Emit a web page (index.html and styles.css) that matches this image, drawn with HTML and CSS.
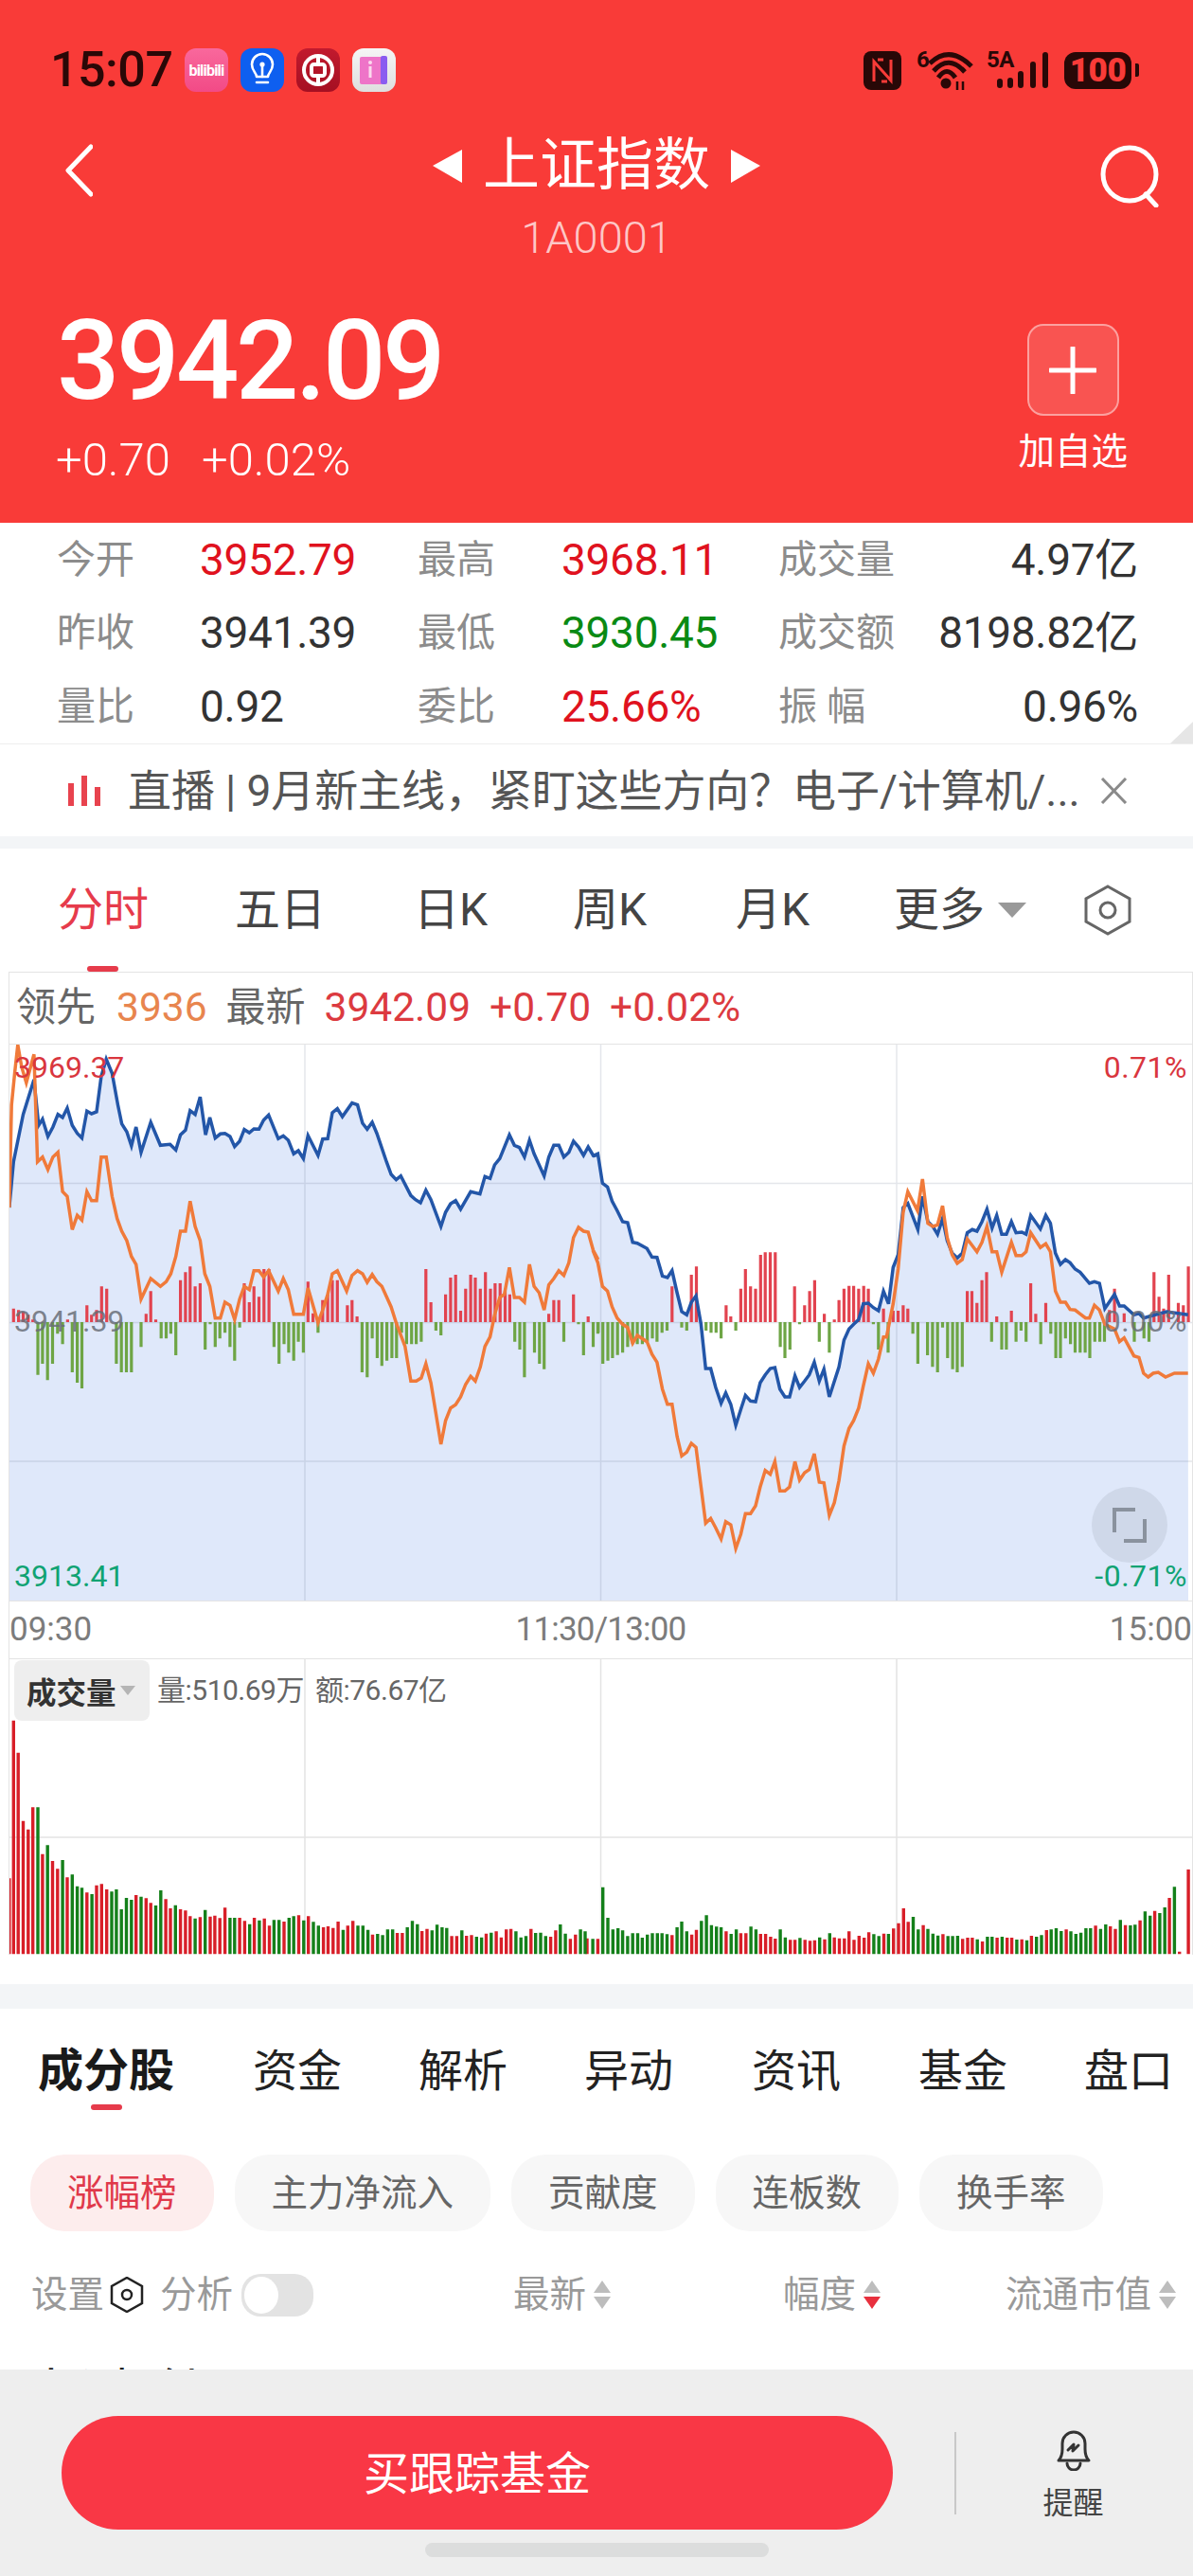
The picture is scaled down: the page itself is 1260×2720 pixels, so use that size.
FILE: index.html
```html
<!DOCTYPE html>
<html lang="zh">
<head>
<meta charset="utf-8">
<title>上证指数</title>
<link rel="stylesheet" href="styles.css">
</head>
<body>
<div class="page">
  <header class="hero">
    <div class="status">
      <span class="clock">15:07</span>
      <div class="apps">
        <span class="app app-bili"><span class="bili-text">bilibili</span></span>
        <svg class="app app-bulb" viewBox="0 0 46 46"><path class="bulb-line" d="M17 30c0-4-5-6-5-13a11 11 0 0 1 22 0c0 7-5 9-5 13z"/><path class="bulb-line" d="M23 30V19M17 36h12"/><circle class="bulb-dot" cx="23" cy="17" r="2.6"/></svg>
        <svg class="app app-boc" viewBox="0 0 46 46"><circle class="boc-line" cx="23" cy="23" r="15"/><rect class="boc-line" x="16" y="17" width="14" height="12" rx="2.5"/><path class="boc-line" d="M23 8v9M23 29v9"/></svg>
        <svg class="app app-book" viewBox="0 0 46 46"><rect class="book-a" x="8" y="9" width="24" height="29" rx="2"/><rect class="book-b" x="30" y="8" width="7" height="30" rx="2"/><rect class="book-i" x="17.500" y="19" width="3" height="12"/><circle class="book-j" cx="19" cy="15" r="2"/></svg>
      </div>
      <div class="sys">
        <svg class="nfc" viewBox="0 0 40 41"><rect class="ink" width="40" height="41" rx="8"/><path class="nfc-n" d="M11 32V11l9 10 9 10V9M15 9h6M19 32h6"/></svg>
        <div class="wifi">
          <span class="mini">6</span>
          <svg class="wifi-svg" viewBox="0 0 48 42"><circle class="ink" cx="18" cy="35" r="5.500"/><path class="ink-line" d="M1 14Q22-6 45 17M5 22Q21 4 38 23M10 29Q19 16 28 29"/><path class="ink-thin" d="M30 42V33M36 33v9"/></svg>
        </div>
        <div class="signal">
          <span class="mini">5A</span>
          <svg class="sig-svg" viewBox="0 0 60 40"><path class="ink-bar" d="M8 36v-4M19 36v-5M30 36V24M43 36V14M56 36V4"/></svg>
        </div>
        <div class="battery"><span class="batt-body">100</span><span class="batt-tip"></span></div>
      </div>
    </div>

    <div class="nav">
      <svg class="back" viewBox="0 0 30 56"><path class="white-line" d="M28 3 4 28l24 25"/></svg>
      <div class="title-box">
        <div class="title-row">
          <svg class="tri" viewBox="0 0 31 35"><path class="white-fill" d="M31 0v35L0 17z"/></svg>
          <span class="title">上证指数</span>
          <svg class="tri" viewBox="0 0 31 35"><path class="white-fill" d="M0 0v35l31-18z"/></svg>
        </div>
        <div class="code">1A0001</div>
      </div>
      <svg class="search" viewBox="0 0 66 66"><circle class="white-line" cx="32" cy="31" r="28"/><path class="white-line" d="m49 52 11 12"/></svg>
    </div>

    <div class="quote">
      <div class="quote-left">
        <div class="price">3942.09</div>
        <div class="change"><span>+0.70</span><span>+0.02%</span></div>
      </div>
      <div class="add">
        <div class="add-btn"><svg class="plus" viewBox="0 0 50 50"><path class="white-line" d="M25 1v48M1 25h48"/></svg></div>
        <div class="add-label">加自选</div>
      </div>
    </div>
  </header>

  <section class="stats">
    <span class="lab">今开</span><span class="num red">3952.79</span>
    <span class="lab">最高</span><span class="num red">3968.11</span>
    <span class="lab">成交量</span><span class="num end">4.97亿</span>
    <span class="lab">昨收</span><span class="num">3941.39</span>
    <span class="lab">最低</span><span class="num green">3930.45</span>
    <span class="lab">成交额</span><span class="num end">8198.82亿</span>
    <span class="lab">量比</span><span class="num">0.92</span>
    <span class="lab">委比</span><span class="num red">25.66%</span>
    <span class="lab">振 幅</span><span class="num end">0.96%</span>
    <span class="corner"></span>
  </section>

  <section class="notice">
    <svg class="live" viewBox="0 0 35 32"><path class="live-bar" d="M3 32V8M17 32V0M31 32V12"/></svg>
    <span class="notice-text">直播 | 9月新主线，紧盯这些方向？电子/计算机/...</span>
    <svg class="close" viewBox="0 0 29 28"><path class="close-line" d="m2 1 25 26M27 1 2 27"/></svg>
  </section>

  <div class="band band-a"></div>

  <nav class="ktabs">
    <span class="ktab ktab-on">分时</span>
    <span class="ktab">五日</span>
    <span class="ktab">日K</span>
    <span class="ktab">周K</span>
    <span class="ktab">月K</span>
    <span class="ktab more">更多<svg class="more-tri" viewBox="0 0 30 16"><path class="more-fill" d="M0 0h30L15 16z"/></svg></span>
    <svg class="hex hex-big" viewBox="0 0 50 54"><path class="hex-line" d="M25 2 48 15v24L25 52 2 39V15z"/><circle class="hex-line" cx="25" cy="27" r="8"/></svg>
  </nav>

  <section class="chart">
    <div class="chart-head">
      <span class="hd-gray">领先</span><span class="hd-orange">3936</span>
      <span class="hd-gray">最新</span><span class="hd-red">3942.09</span><span class="hd-red">+0.70</span><span class="hd-red">+0.02%</span>
    </div>
    <div class="plot">
      <svg class="plot-svg" viewBox="10 1103 1249 587">
        <path id="area" class="area"/>
        <path class="grid" d="M322 1103V1690M634.500 1103V1690M947 1103V1690M10 1249.500H1259M10 1543H1259M10 1396.500H1259"/>
        <path id="macd-red" class="macd-red"/>
        <path id="macd-green" class="macd-green"/>
        <path id="line-blue" class="line-blue"/>
        <path id="line-orange" class="line-orange"/>
      </svg>
      <span class="tag tag-l tag-top red-soft">3969.37</span>
      <span class="tag tag-l tag-mid gray-soft">3941.39</span>
      <span class="tag tag-l tag-bot teal">3913.41</span>
      <span class="tag tag-r tag-top red-soft">0.71%</span>
      <span class="tag tag-r tag-mid gray-soft">0.00%</span>
      <span class="tag tag-r tag-bot teal">-0.71%</span>
      <span class="expand"><svg class="expand-svg" viewBox="0 0 40 40"><path class="expand-line" d="M26 4H4v24M36 14v23H14"/></svg></span>
    </div>
    <div class="axis"><span>09:30</span><span class="axis-mid">11:30/13:00</span><span>15:00</span></div>
    <div class="volume">
      <svg class="vol-svg" viewBox="10 1752 1249 312">
        <path class="grid-light" d="M322 1752V2064M634.500 1752V2064M947 1752V2064M10 1940H1259"/>
        <path id="vol-red" class="vol-red"/>
        <path id="vol-green" class="vol-green"/>
      </svg>
      <div class="vol-head">
        <span class="vol-pill">成交量<svg class="pill-tri" viewBox="0 0 16 10"><path class="pill-fill" d="M0 0h16L8 10z"/></svg></span>
        <span class="vol-info">量:510.69万</span>
        <span class="vol-info">额:76.67亿</span>
      </div>
    </div>
  </section>

  <div class="chart-gap"></div>
  <div class="band band-b"></div>

  <nav class="stabs">
    <span class="stab stab-on">成分股</span>
    <span class="stab">资金</span>
    <span class="stab">解析</span>
    <span class="stab">异动</span>
    <span class="stab">资讯</span>
    <span class="stab">基金</span>
    <span class="stab">盘口</span>
  </nav>

  <div class="chips">
    <span class="chip chip-on">涨幅榜</span>
    <span class="chip">主力净流入</span>
    <span class="chip">贡献度</span>
    <span class="chip">连板数</span>
    <span class="chip">换手率</span>
  </div>

  <div class="sortrow">
    <div class="sort-left">
      <span>设置</span>
      <svg class="hex hex-small" viewBox="0 0 36 38"><path class="hex-dark" d="M18 1 34 10v18L18 37 2 28V10z"/><circle class="hex-dark" cx="18" cy="19" r="5"/></svg>
      <span class="sort-gap">分析</span>
      <span class="toggle"><span class="knob"></span></span>
    </div>
    <div class="sort-col">最新<svg class="arrows" viewBox="0 0 18 30"><path class="arr" d="M9 0l9 13H0z"/><path class="arr" d="M0 17h18L9 30z"/></svg></div>
    <div class="sort-col">幅度<svg class="arrows" viewBox="0 0 18 30"><path class="arr" d="M9 0l9 13H0z"/><path class="arr-on" d="M0 17h18L9 30z"/></svg></div>
    <div class="sort-col">流通市值<svg class="arrows" viewBox="0 0 18 30"><path class="arr" d="M9 0l9 13H0z"/><path class="arr" d="M0 17h18L9 30z"/></svg></div>
  </div>

  <div class="clipped-row">中际旭创</div>

  <footer class="footer">
    <div class="foot-row">
      <button class="buy">买跟踪基金</button>
      <span class="foot-div"></span>
      <div class="remind">
        <svg class="bell" viewBox="0 0 44 44"><path class="bell-line" d="M6 33c3-3 4-6 4-12V15a12 12 0 0 1 24 0v6c0 6 1 9 4 12z"/><path class="bell-line" d="M15 36a7 7 0 0 0 14 0"/><path class="bell-line" d="m16 22 6-6-1 7 6-6"/></svg>
        <span class="remind-label">提醒</span>
      </div>
    </div>
    <div class="home-bar"></div>
  </footer>
</div>
<script src="chart.js"></script>
</body>
</html>
```

FILE: styles.css
```css
* { box-sizing: border-box; }
html, body { margin: 0; padding: 0; background: #fff; }
.page {
  width: 1260px; height: 2720px; overflow: hidden; background: #fff;
  font-family: Roboto, "Noto Sans CJK SC", sans-serif; color: #333;
}
svg { display: block; flex: none; }

/* hero */
.hero { height: 552px; padding-top: 51px; background: #f93b38; color: #fff; }
.status { display: flex; align-items: center; height: 46px; padding: 0 57px 0 53px; }
.clock { font-size: 52px; line-height: 46px; font-weight: 500; color: #2a0807; letter-spacing: -0.5px; width: 142px; }
.apps { display: flex; gap: 13px; }
.app { width: 46px; height: 46px; border-radius: 12px; }
.app-bili { display: flex; align-items: center; justify-content: center; background: linear-gradient(#f9689c, #f24a86); overflow: hidden; }
.bili-text { font-size: 16px; font-weight: 700; color: #fff; letter-spacing: -0.8px; }
.app-bulb { background: #0e5ff0; }
.bulb-line { fill: none; stroke: #fff; stroke-width: 2.600; stroke-linecap: round; stroke-linejoin: round; }
.bulb-dot { fill: #fff; }
.app-boc { background: linear-gradient(#c21a2e, #a50f22); }
.boc-line { fill: none; stroke: #fff; stroke-width: 4; }
.app-book { background: linear-gradient(#f5f5f5, #dedede); }
.book-a { fill: #ee74c8; }
.book-b { fill: #8a5cf0; }
.book-i, .book-j { fill: #fbd9ee; }
.sys { display: flex; align-items: center; margin-left: auto; height: 46px; }
.nfc { width: 40px; height: 41px; margin-right: 16px; }
.ink { fill: #280807; }
.nfc-n { fill: none; stroke: #f93b38; stroke-width: 3; }
.wifi { position: relative; width: 60px; height: 42px; margin-right: 14px; }
.wifi-svg { width: 48px; height: 42px; margin-left: 13px; }
.ink-line { fill: none; stroke: #280807; stroke-width: 5; }
.ink-thin { fill: none; stroke: #280807; stroke-width: 2.500; }
.mini { position: absolute; left: 0; top: -3px; font-size: 24px; line-height: 26px; font-weight: 700; color: #280807; letter-spacing: -0.5px; }
.signal { position: relative; width: 66px; height: 42px; margin-right: 16px; }
.sig-svg { width: 60px; height: 40px; margin: 1px 0 0 6px; }
.ink-bar { fill: none; stroke: #280807; stroke-width: 6; stroke-linecap: round; }
.battery { display: flex; align-items: center; }
.batt-body { display: block; width: 71px; height: 39px; border-radius: 12px; background: #280807; color: #f93b38; font-size: 35px; line-height: 39px; font-weight: 900; text-align: center; letter-spacing: -0.5px; }
.batt-tip { display: block; width: 4px; height: 14px; margin-left: 4px; background: #280807; border-radius: 0 2px 2px 0; }

.nav { display: grid; grid-template-columns: 1fr auto 1fr; align-items: start; padding: 0 33px; margin-top: 43px; }
.back { width: 30px; height: 56px; margin: 12px 0 0 35px; }
.search { width: 66px; height: 66px; margin-top: 13px; justify-self: end; }
.white-line { fill: none; stroke: #fff; stroke-width: 5; stroke-linecap: round; stroke-linejoin: round; }
.white-fill { fill: #fff; }
.title-box { display: flex; flex-direction: column; align-items: center; }
.title-row { display: flex; align-items: center; gap: 22px; height: 70px; }
.tri { width: 31px; height: 35px; }
.title { font-size: 60px; line-height: 70px; color: #fff; }
.code { margin-top: 15px; font-size: 47px; line-height: 52px; font-weight: 300; color: rgba(255,255,255,.72); }

.quote { display: flex; justify-content: space-between; margin-top: 41px; padding: 0 69px 0 60px; }
.quote-left { padding-top: 3px; }
.price { font-size: 117px; line-height: 120px; font-weight: 500; letter-spacing: -3.500px; color: #fff; }
.change { display: flex; gap: 33px; margin-top: 17px; margin-left: -1px; font-size: 49px; line-height: 56px; font-weight: 300; }
.add { display: flex; flex-direction: column; align-items: center; padding-top: 24px; }
.add-btn { display: flex; align-items: center; justify-content: center; width: 97px; height: 97px; border-radius: 17px; border: 2px solid rgba(255,255,255,.45); background: rgba(255,255,255,.13); }
.plus { width: 50px; height: 50px; }
.add-label { margin-top: 15px; font-size: 38.500px; line-height: 46px; color: #fff; }

/* stats */
.stats { position: relative; display: grid; grid-template-columns: 151px 230px 152px 229px 140px 1fr; grid-auto-rows: 77.500px; align-items: center; height: 234px; padding: 0 58px 0 60px; border-bottom: 1px solid #eee; }
.lab { font-size: 41px; line-height: 50px; color: #8c8c8c; white-space: nowrap; }
.num { font-size: 46px; line-height: 50px; color: #333; white-space: nowrap; letter-spacing: -0.300px; }
.end { text-align: right; }
.red { color: #e0121e; }
.green { color: #0a8a14; }
.corner { position: absolute; right: 0; bottom: 0; width: 0; height: 0; border-left: 24px solid transparent; border-bottom: 23px solid #e6e6e6; }

/* notice */
.notice { display: flex; align-items: center; height: 97px; padding: 0 69px 0 72px; }
.live { width: 35px; height: 32px; margin-right: 28px; }
.live-bar { fill: none; stroke: #e8434e; stroke-width: 6; }
.notice-text { font-size: 46px; line-height: 60px; color: #555; white-space: nowrap; letter-spacing: -0.100px; }
.close { width: 29px; height: 28px; margin-left: auto; }
.close-line { fill: none; stroke: #8a8a8a; stroke-width: 3; }
.band { background: #f3f5f7; }
.band-a { height: 13px; }
.band-b { height: 26px; }

/* k tabs */
.ktabs { display: grid; grid-template-columns: 187px 189px 168px 172px 167px 201px 1fr; align-items: center; height: 130px; padding-left: 61px; }
.ktab { position: relative; font-size: 48px; line-height: 60px; color: #444; }
.ktab-on { color: #e63b4b; }
.ktab-on::after { content: ""; position: absolute; left: 31px; top: 89px; width: 33px; height: 6px; border-radius: 3px; background: #e63b4b; }
.more { display: flex; align-items: center; }
.more-tri { width: 30px; height: 16px; margin-left: 14px; }
.more-fill { fill: #999; }
.hex-big { width: 50px; height: 54px; }
.hex-line { fill: none; stroke: #666; stroke-width: 3; }

/* chart */
.chart { margin-left: 9px; border: 1px solid #e4e4e4; border-bottom: none; }
.chart-head { display: flex; align-items: center; height: 76px; padding: 0 0 2px 7px; border-bottom: 1px solid #e4e4e4; font-size: 42.500px; line-height: 60px; }
.hd-gray { color: #666; margin-right: 20px; font-size: 42px; }
.hd-orange { color: #e8854e; margin: 0 20px 0 2px; }
.hd-red { color: #dc3a40; margin-right: 20px; }
.plot { position: relative; height: 587px; }
.plot-svg { width: 1249px; height: 587px; }
.area { fill: #dfe8fa; }
.grid { fill: none; stroke: rgba(90,100,130,.16); stroke-width: 1.500; }
.macd-red { fill: none; stroke: #e2434f; stroke-width: 3.200; }
.macd-green { fill: none; stroke: #6ea545; stroke-width: 3.200; }
.line-blue { fill: none; stroke: #2356a8; stroke-width: 3.500; }
.line-orange { fill: none; stroke: #f07a3a; stroke-width: 3.500; }
.tag { position: absolute; font-size: 32px; line-height: 40px; }
.tag-l { left: 5px; }
.tag-r { right: 5px; letter-spacing: 0.500px; }
.tag-top { top: 4px; }
.tag-mid { top: 272px; }
.tag-bot { top: 541px; }
.red-soft { color: #d9363e; }
.gray-soft { color: rgba(105,110,120,.85); }
.teal { color: #10a373; }
.expand { position: absolute; left: 1143px; top: 467px; display: flex; align-items: center; justify-content: center; width: 80px; height: 80px; border-radius: 50%; background: rgba(150,160,175,.22); }
.expand-svg { width: 40px; height: 40px; }
.expand-line { fill: none; stroke: #8a929e; stroke-width: 4; }
.axis { display: flex; justify-content: space-between; align-items: center; height: 62px; border-top: 1.500px solid #e4e4e4; border-bottom: 1.500px solid #e4e4e4; font-size: 35px; line-height: 40px; color: #7c7c7c; }
.axis-mid { letter-spacing: -0.800px; }
.volume { position: relative; height: 312px; }
.vol-svg { width: 1249px; height: 312px; }
.grid-light { fill: none; stroke: #e4e4e4; stroke-width: 1.500; }
.vol-red { fill: none; stroke: #d81e28; stroke-width: 3.400; }
.vol-green { fill: none; stroke: #14801a; stroke-width: 3.400; }
.vol-head { position: absolute; left: 5px; top: 1px; display: flex; align-items: center; }
.vol-pill { display: flex; align-items: center; width: 143px; height: 64px; padding-left: 13px; margin-right: 8px; border-radius: 8px; background: #eeeeee; font-size: 31.500px; font-weight: 700; color: #333; }
.pill-tri { width: 16px; height: 10px; margin-left: 4px; }
.pill-fill { fill: #b5b5b5; }
.vol-info { font-size: 30px; line-height: 40px; color: #666; margin-right: 12px; letter-spacing: -0.500px; }
.chart-gap { height: 31px; }

/* section tabs */
.stabs { display: grid; grid-template-columns: 227px 175px 175px 177px 176px 175px 1fr; height: 154px; padding: 34px 0 0 40px; }
.stab { position: relative; height: 64px; font-size: 47px; line-height: 64px; color: #222; }
.stab-on { font-size: 48px; font-weight: 700; color: #1a1a1a; }
.stab-on::after { content: ""; position: absolute; left: 56px; top: 67px; width: 33px; height: 6px; border-radius: 3px; background: #e63b4b; }

.chips { display: flex; gap: 22px; padding-left: 32px; }
.chip { height: 81px; padding: 0 39px; border-radius: 36px; background: #f7f7f7; font-size: 38.500px; line-height: 81px; color: #666; white-space: nowrap; }
.chip-on { background: #fdeded; color: #e0394a; }

.sortrow { display: grid; grid-template-columns: 509px 285px 235px 1fr; align-items: center; height: 64px; margin-top: 35px; padding-left: 33px; font-size: 38.500px; line-height: 50px; color: #999; }
.sort-left { display: flex; align-items: center; }
.hex-small { width: 36px; height: 38px; margin-left: 6px; }
.hex-dark { fill: none; stroke: #222; stroke-width: 2.500; }
.sort-gap { margin-left: 17px; }
.toggle { display: block; width: 76px; height: 45px; margin-left: 9px; padding: 3px; border-radius: 20px; background: #e3e3e3; }
.knob { display: block; width: 36px; height: 39px; border-radius: 50%; background: #fff; }
.sort-col { display: flex; align-items: center; gap: 8px; }
.arrows { width: 18px; height: 30px; }
.arr { fill: #bdbdbd; }
.arr-on { fill: #e8303e; }

.clipped-row { height: 12px; margin-top: 35px; padding-left: 32px; overflow: hidden; font-size: 44px; line-height: 66px; font-weight: 500; color: #222; }

/* footer */
.footer { height: 218px; padding-top: 49px; background: #eeeeee; }
.foot-row { display: flex; align-items: center; height: 120px; padding-left: 65px; }
.buy { width: 878px; height: 120px; padding: 0 0 7px; border: none; border-radius: 60px; background: #f93745; color: #fff; font-family: inherit; font-size: 48px; }
.foot-div { display: block; width: 1.500px; height: 87px; margin-left: 65px; background: #c8c8c8; }
.remind { display: flex; flex-direction: column; align-items: center; width: 100px; margin-left: 74px; margin-top: 6px; }
.bell { width: 44px; height: 44px; }
.bell-line { fill: none; stroke: #333; stroke-width: 3; stroke-linejoin: round; stroke-linecap: round; }
.remind-label { margin-top: 14px; font-size: 32px; line-height: 40px; color: #444; }
.home-bar { width: 363px; height: 15px; margin: 14px 0 0 449px; border-radius: 8px; background: #dcdddd; }
```

FILE: chart.js
```js
// Chart data transcribed as [x, y] samples, drawn into the svg paths of index.html.
function seg(xo, yo, a) {
  var out = [];
  for (var i = 0; i < a.length; i += 2) out.push([xo + a[i] / 2.45, yo + a[i + 1] / 3]);
  return out;
}
function toPath(p) {
  return p.map(function (q, i) { return (i ? 'L' : 'M') + q[0].toFixed(1) + ' ' + q[1].toFixed(1); }).join('');
}
function set(id, d) { document.getElementById(id).setAttribute('d', d); }

var blue = [].concat(
  seg(0, 1000, [24,825,35,680,60,530,88,420,100,565,110,545,124,600,137,570,150,530,162,540,174,510,187,565,200,590,212,605,225,520,237,528,250,522,262,410,275,355,290,400,305,500,315,560,328,585,340,630,352,570,365,650,390,555,415,628,440,625,455,643,467,595,480,580,492,518,505,530,518,475,532,595,543,540,557,605,570,592,582,590,595,600,607,632,620,615,632,578,645,588,657,576,670,577,682,548,695,532,720,607,733,598,746,612,760,655,772,645,785,670,797,597,823,660,835,608,848,607,860,525,873,512,886,537,911,494,925,500,938,558,950,577,963,555,975,590,1000,680,1012,720,1025,737,1037,725,1063,787,1075,800,1088,810,1102,770,1115,800,1141,885,1153,840,1166,813,1179,803,1192,830,1218,775,1242,782,1255,727,1268,733,1280,690,1293,670,1318,595,1331,628,1344,635,1357,665,1370,612,1382,655,1408,725,1420,665,1433,628,1446,628,1459,665,1472,650,1484,615,1497,633,1510,660,1522,633,1535,660,1548,657]),
  seg(620, 1000, [15,662,28,655,40,748,53,760,65,805,78,835,92,870,105,873,118,935,130,938,155,955,168,982,181,983,195,1042,208,1047,220,1025,233,1095,245,1155,258,1165,270,1125,282,1105,295,1195]),
  seg(620, 1380, [307,195,320,195,333,255,347,305,359,272,372,308,385,375,398,325,410,280,423,298,436,300,448,240,461,215,474,195,486,192,499,260,512,285,524,285,538,218,550,255,563,235,575,215,588,175,601,235,613,197,627,285,652,190,665,105,678,70,690,55,703,40]),
  seg(620, 1000, [715,1130,728,1128,741,1142,754,1152,767,1090,780,1130,792,1015,805,975,818,825,830,812,856,895,868,790,882,870,895,885,907,910,920,860,932,930,945,970,958,985,971,970,984,905,997,895,1009,900,1022,870,1035,830,1048,890,1060,850,1073,910,1085,910,1098,870,1110,905,1125,903,1136,910,1148,850,1173,893,1187,850,1199,875,1212,970,1225,1005,1238,990,1250,1000,1263,1020,1276,1030,1300,1065,1313,1060,1326,1065,1340,1145,1365,1100,1378,1137,1390,1137,1415,1165,1428,1160,1440,1175,1470,1165,1500,1155,1555,1165])
);
var orange = [].concat(
  seg(0, 1000, [24,825,30,500,38,400,46,310,56,380,68,430,88,340,97,680,110,665,124,705,137,665,150,650,162,775,174,790,187,895,200,850,212,865,225,775,237,803,250,803,262,665,275,665,290,790,303,860,315,900,328,930,340,980,352,1005,365,1115,390,1050,415,1075,430,1060,442,1035,455,980,467,900,480,900,492,805,505,885,518,930,530,1035,543,1075,557,1175,570,1175,582,1125,595,1135,607,1180,620,1115,632,1075,645,1085,657,1025,670,1025,682,1045,695,1025,720,1090,733,1050,746,1085,760,1163,785,1163,797,1080,823,1190,835,1150,848,1100,860,1035,873,1025,897,1090,911,1040,925,1025,938,1035,950,1062,963,1037,975,1060,988,1075,1012,1140,1025,1190]),
  seg(0, 1380, [1048,125,1063,235,1077,235,1090,225,1102,180,1115,240,1141,435,1153,360,1166,320,1179,310,1192,285,1205,245,1218,220,1230,235,1243,190,1255,125,1268,95,1280,25]),
  seg(0, 1000, [1293,1110,1305,1100,1318,1015,1331,1110,1344,1110,1357,1125,1370,1005,1382,1075,1395,1095,1408,1150,1420,1070,1433,1050,1446,1025,1459,1040,1472,1000,1484,920,1497,888,1510,900,1522,903,1535,960,1548,990]),
  seg(620, 1000, [15,960,28,1000,40,1075,53,1090,65,1140,78,1175,92,1195,105,1205,118,1255,130,1230,155,1250]),
  seg(620, 1380, [168,150,181,175,195,260,208,308,220,308,233,410,245,472,258,460,270,432,282,445,295,570,307,685,320,670,333,700,347,735,359,680,372,690,385,765,398,720,410,655,423,655,436,630,448,570,461,518,474,530,486,490,499,583,512,583,524,570,538,490,550,548,563,525,575,515,588,465,601,555,613,557,627,660,640,620,652,550,665,440,678,385,690,360,703,320,715,250,728,180,741,210,754,165,767,95,775,95]),
  seg(620, 1000, [792,1130,805,1020,818,840,830,775,855,835,868,735,882,875,895,885,907,880,920,820,932,920,945,975,958,1002,971,990,984,925,1009,965,1022,935,1035,885,1048,965,1060,965,1073,1030,1098,935,1110,977,1125,977,1136,965,1148,905,1173,952,1187,940,1199,965,1212,1090,1225,1125,1238,1125,1250,1148,1263,1150,1276,1162,1290,1175,1300,1175,1313,1135,1326,1150,1340,1195]),
  seg(620, 1380, [1365,70,1378,110,1390,98,1415,155,1428,160,1440,210,1452,222,1465,210,1478,207,1497,222,1520,210,1555,210])
);

set('line-blue', toPath(blue));
set('line-orange', toPath(orange));
set('area', toPath(blue) + 'L1255 1690L10 1690Z');

function bars(xo, yo, base, a) {
  var d = '';
  var b = yo + base / 3;
  for (var i = 0; i < a.length; i += 2) d += 'M' + (xo + a[i] / 2.45).toFixed(1) + ' ' + b.toFixed(1) + 'V' + (yo + a[i + 1] / 3).toFixed(1);
  return d;
}
set('macd-red',
  bars(0, 1000, 1188, [35,1145,48,1150,60,1155,73,1165,85,1180,175,1180,225,1135,237,1165,250,1150,263,1075,276,1082,378,1162,390,1090,403,1180,467,1055,480,1030,492,1012,505,1075,518,1065,632,1065,645,1125,657,1075,670,1108,683,1020,696,1020,797,1060,810,1160,835,1118,848,1100,860,1055,873,1055,899,1135,911,1118,924,1170,1102,1020,1115,1125,1153,1100,1166,1047,1179,1038,1192,1152,1205,1082,1218,1038,1230,1047,1243,1082,1256,1030,1269,1082,1281,1065,1294,1065,1307,1090,1319,1100,1420,1162,1433,1118,1446,1118,1484,1100,1522,1170]) +
  bars(620, 1000, 1188, [3,1170,220,1075,270,1038,283,1012,360,1135,372,1170,398,1082,410,1020,423,1075,436,1082,449,975,461,967,474,967,487,967,537,1075,563,1135,576,1090,589,1055,614,1162,640,1180,652,1118,665,1082,678,1073,690,1073,703,1082,716,1073,728,1082,767,1145,792,1152,805,1152,818,1135,830,1145,984,1090,996,1090,1009,1127,1022,1055,1034,1030,1060,1170,1098,1152,1148,1065,1161,1162,1187,1127,1352,1150,1365,1082,1390,1160,1467,1030,1480,1108,1492,1145,1505,1038,1530,1127,1543,1135,1556,1012]));
set('macd-green',
  bars(0, 1380, 48, [98,215,110,180,123,232,136,180,149,85,162,118,187,207,200,240,212,258,301,180,314,207,327,207,340,207,365,127,417,100,430,100,442,85,455,153,531,135,544,55,557,127,569,100,582,82,595,127,607,170,620,65,709,127,722,180,735,118,747,145,760,170,772,110,785,145,823,82,937,207,950,223,963,100,976,162,988,187,1001,170,1014,162,1026,162,1039,82,1052,118,1065,118,1077,118,1090,110,1128,75,1141,90,1332,110,1345,135,1357,223,1383,145,1396,180,1408,197,1459,110,1497,55,1510,153,1535,127,1548,82,1560,180]) +
  bars(620, 1380, 48, [16,127,28,85,41,180,54,170,66,162,79,152,92,145,105,127,118,118,130,118,143,118,156,110,169,100,181,110,194,82,207,75,245,65,258,75,308,75,321,82,334,82,347,100,385,75,500,127,512,162,525,135,550,55,601,110,627,145,741,55,754,135,779,145,843,85,856,180,881,153,894,190,907,207,920,65,933,162,946,197,958,207,971,190,1047,110,1073,135,1085,135,1110,110,1123,75,1136,110,1174,118,1200,85,1213,162,1225,162,1238,100,1251,118,1263,145,1276,145,1289,145,1301,162,1314,110,1327,110,1339,110,1416,110,1441,100,1454,110]));

var volA = '24:880r 35:380r 47:482r 60:698r 73:725r 85:655r 98:655g 110:803r 123:775g 136:825r 149:850r 162:822g 174:877r 187:868g 200:905g 212:910g 225:925r 238:930g 250:902r 263:898r 276:915r 289:922g 301:915g 314:978g 327:942g 340:948g 352:933r 365:938g 378:943r 390:958r 403:966g 416:918g 429:946r 441:975r 454:965g 467:978r 480:982r 492:1000r 505:1007g 518:1003r 531:980g 544:1001r 556:998r 569:1006r 582:973r 595:1005g 607:1005g 620:1005r 633:1015r 646:1025g 658:1005r 671:1013g 684:1007r 697:1030r 709:1012g 722:1012g 735:1017r 748:1005g 760:1000g 773:997r 786:1013g 798:1000r 811:1018g 824:1030g 837:1035r 849:1032r 862:1037r 875:1017r 888:1043g 900:1030r 913:1015r 926:1030g 939:1030g 952:1043g 964:1058r 977:1056g 990:1060g 1003:1042g 1016:1042g 1028:1053r 1041:1053r 1054:1035g 1067:1015g 1080:1025g 1092:1047r 1105:1040r 1118:1045g 1131:1027g 1144:1035g 1156:1037g 1169:1063r 1182:1063r 1195:1045g 1207:1062r 1220:1060r 1233:1065g 1246:1067g 1258:1055r 1271:1052g 1284:1048r 1297:1067r 1310:1042r 1322:1040r 1335:1048g 1348:1067g 1361:1063g 1374:1040r 1386:1053g 1399:1052g 1412:1063g 1425:1065r 1438:1045r 1450:1026g 1463:1055g 1476:1072r 1489:1058r 1502:1042g 1514:1048g';
var volB = '0:980r 15:982g 28:982r 41:818g 54:915g 67:952g 80:948g 92:955g 105:973g 118:964g 131:964g 143:978g 156:968g 169:964g 182:964g 194:964g 207:967g 220:970r 233:945g 245:927g 258:958g 271:968r 283:953r 296:925g 309:907g 322:938g 335:943g 347:945g 360:958r 373:966g 386:952g 398:964r 411:964r 424:943g 437:952g 449:966r 462:966r 475:975r 487:981r 500:952g 513:977g 526:985r 538:985r 551:979g 564:985r 577:988r 589:986r 602:977g 615:983r 628:964g 640:977r 653:980r 666:980r 678:958r 691:985r 704:972r 717:978r 729:961r 742:967g 755:973g 768:965r 780:966g 793:949r 806:932r 819:885r 831:928r 844:912g 857:952g 870:938r 882:950g 895:965g 908:971g 921:967r 934:973g 946:973g 959:972g 972:982r 985:978r 997:978r 1010:983g 1023:990r 1036:975g 1048:975g 1061:978r 1074:975g 1087:978r 1099:978r 1112:984g 1125:983r 1138:986g 1150:972r 1163:975g 1176:970g 1189:954r 1201:952g 1214:948g 1227:957g 1240:952r 1252:958g 1265:966g 1278:962g 1291:948g 1303:948g 1316:940r 1329:950g 1342:936g 1354:942r 1367:950r 1380:922g 1393:938r 1406:939g 1418:937g 1431:923r 1444:895g 1457:908g 1469:893r 1482:900g 1495:882g 1507:852r 1520:817g 1533:1022r 1556:762r';
function volPaths(s, xo, yo) {
  var r = '', g = '';
  s.split(' ').forEach(function (t) {
    var x = xo + parseInt(t, 10) / 2.45, top = yo + parseInt(t.split(':')[1], 10) / 3;
    var d = 'M' + x.toFixed(1) + ' 2063.3V' + top.toFixed(1);
    if (t.slice(-1) === 'r') r += d; else g += d;
  });
  return [r, g];
}
var a = volPaths(volA, 0, 1690), b = volPaths(volB, 620, 1720);
set('vol-red', a[0] + b[0]);
set('vol-green', a[1] + b[1]);
```
